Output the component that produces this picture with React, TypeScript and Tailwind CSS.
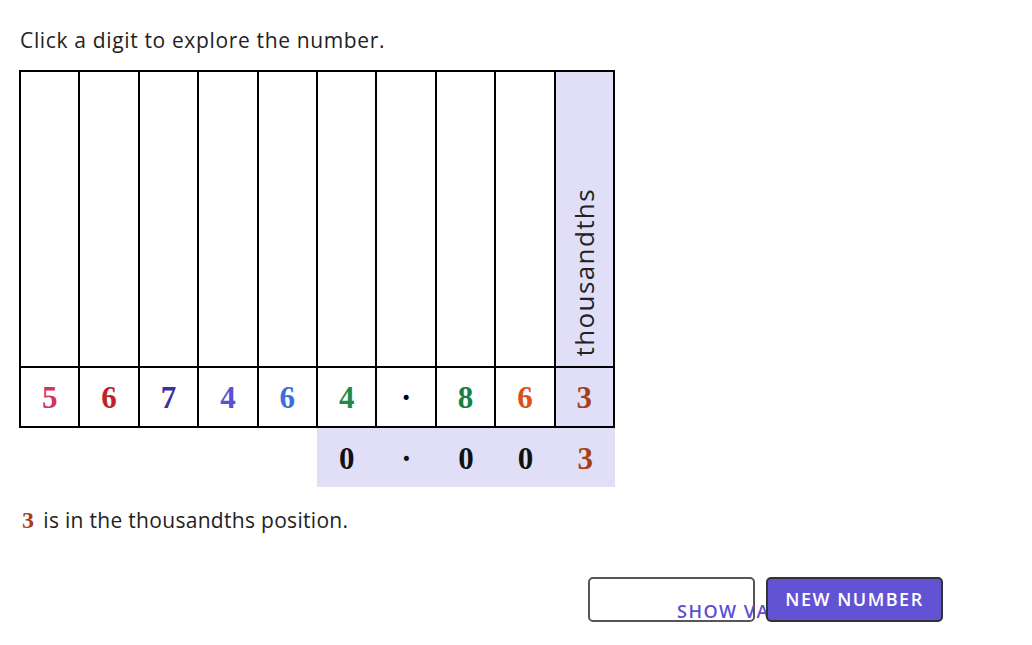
const digits = [
  { d: "5", c: "text-[#d6335e]" },
  { d: "6", c: "text-[#c21f2b]" },
  { d: "7", c: "text-[#3a2fa6]" },
  { d: "4", c: "text-[#5a50d2]" },
  { d: "6", c: "text-[#3b6ed8]" },
  { d: "4", c: "text-[#1f8a4c]" },
  { d: "·", c: "text-black" },
  { d: "8", c: "text-[#1a7f45]" },
  { d: "6", c: "text-[#d9501e]" },
  { d: "3", c: "text-[#a3401a]" },
];

const serif = "font-['Liberation_Serif',serif]";
const sans = "font-['Open_Sans',sans-serif]";

function App() {
  return (
    <div className={`min-h-screen bg-white pl-[19px] pt-[25px] text-[#222] ${sans}`}>
      <p className="ml-px h-[45px] text-[21px] leading-[30px] tracking-[0.65px]">Click a digit to explore the number.</p>

      <div className="grid w-[596px] grid-cols-10 border-l-2 border-t-2 border-black">
        {digits.map((x, i) => (
          <div
            key={"h" + i}
            className={`flex h-[296px] items-end justify-center border-b-2 border-r-2 border-black pb-[10px] ${
              i === 9 ? "bg-[#e1dff8]" : "bg-white"
            }`}
          >
            {i === 9 && (
              <span className="rotate-180 text-[26px] leading-none tracking-[1.4px] text-[#222] [writing-mode:vertical-rl]">
                thousandths
              </span>
            )}
          </div>
        ))}
        {digits.map((x, i) => (
          <button
            key={"d" + i}
            className={`flex h-[60px] items-center justify-center border-b-2 border-r-2 border-black pt-[2px] text-[31px] font-bold ${serif} ${x.c} ${
              i === 9 ? "bg-[#e1dff8]" : "bg-white"
            }`}
          >
            {x.d}
          </button>
        ))}
      </div>

      <div className="grid w-[596px] grid-cols-10">
        <div className={`col-span-5 col-start-6 grid h-[59px] grid-cols-5 bg-[#e1dff8] pt-[4px] text-[31px] font-bold ${serif}`}>
          <span className="flex items-center justify-center text-[#111]">0</span>
          <span className="flex items-center justify-center text-[#111]">·</span>
          <span className="flex items-center justify-center text-[#111]">0</span>
          <span className="flex items-center justify-center text-[#111]">0</span>
          <span className="flex items-center justify-center text-[#a3401a]">3</span>
        </div>
      </div>

      <p className="mt-[18px] ml-[3px] flex items-baseline gap-[9px] text-[21px] leading-[30px] tracking-[0.3px]">
        <span className={`text-[24px] font-bold text-[#a3401a] ${serif}`}>3</span>
        <span>is in the thousandths position.</span>
      </p>

      <div className="ml-[569px] mt-[42px] flex gap-[11px]">
        <button className="relative h-[45px] w-[167px] overflow-visible whitespace-nowrap rounded-[5px] border-2 border-[#555] bg-white pl-[87px] pt-[19px] text-left text-[18px] font-semibold tracking-[1.5px] text-[#5b4fd6]">
          SHOW VALUE
        </button>
        <button className="relative z-10 h-[45px] w-[177px] rounded-[5px] border-2 border-[#333] bg-[#6153d3] text-[18px] font-semibold tracking-[1.5px] text-white">
          NEW NUMBER
        </button>
      </div>
    </div>
  );
}

export default App;
